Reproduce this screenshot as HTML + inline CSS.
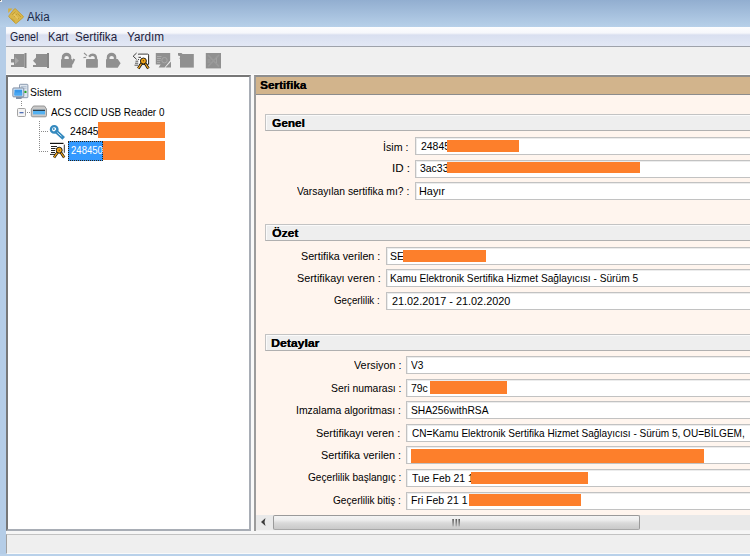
<!DOCTYPE html>
<html><head><meta charset="utf-8">
<style>
*{margin:0;padding:0;box-sizing:border-box}
html,body{width:750px;height:556px;overflow:hidden;background:#b6cfe8;font-family:"Liberation Sans",sans-serif;font-size:11px;color:#000}
.a{position:absolute;white-space:nowrap}
#title{left:0;top:0;width:750px;height:27px;background:linear-gradient(#92aed0,#b7d0e9)}
#splitbg{left:6px;top:47px;width:744px;height:507px;background:#f0f0f0}
#frameL{left:0;top:27px;width:6px;height:529px;background:#b5cde7}
#frameB{left:0;top:554px;width:750px;height:2px;background:#b9d1ea}
#menu{left:6px;top:27px;width:744px;height:20px;background:linear-gradient(#fdfdfe 0,#f6f7fb 6px,#d9dff0 8px,#dfe5f3 15px,#e3e8f5 19px);border-bottom:1px solid #9ea2aa}
.mi{font-size:12px;top:3px;color:#1e1e3c;letter-spacing:-0.3px}
#tool{left:6px;top:47px;width:744px;height:28px;background:#f0f0f0}
#tree{left:6px;top:75px;width:245px;height:456px;background:#fff;border:2px solid;border-color:#777 #a8adb5 #a8adb5 #777}
#split{left:251px;top:74px;width:3px;height:460px;background:#f9f9f9}
#line74{left:6px;top:74px;width:744px;height:1px;background:#fbfbfb}
#bot{left:6px;top:531px;width:744px;height:3px;background:#f6f6f6}
#right{left:254px;top:75px;width:496px;height:456px;background:#fff5ee;border-left:2px solid #9c9c9c;border-top:2px solid #8e8e8e}
#hdr{left:256px;top:77px;width:494px;height:18px;background:#d2b48c;border-bottom:1px solid #8c8c8c}
.sec{left:265px;width:485px;height:17px;background:#eeeeee;border:1px solid #c3c3c3;border-bottom-color:#b0b0b0;border-right:none;box-shadow:inset 1px 1px 0 #fafafa}
.sect{font-weight:bold;left:272px;letter-spacing:0.3px}
.lab{text-align:right;left:250px}
.inp{height:18px;background:#fff;border:1px solid #c2c2c2;border-right:none;box-shadow:inset 1px 1px 0 #ececec}
.it{}
.or{background:#fd7f2b;z-index:5}
#status{left:6px;top:534px;width:744px;height:20px;background:#efefef;border-top:1px solid #c2c2c2;border-bottom:1px solid #fafafa;border-left:1px solid #a0a0a0}
#sb{left:256px;top:515px;width:494px;height:16px;background:#e9e9e9;border-bottom:1px solid #f3f3f3}
#thumb{left:273px;top:515px;width:367px;height:15px;border:1px solid #9a9a9a;border-bottom-color:#a8a8a8;border-radius:2px;background:linear-gradient(#f4f4f4 0,#ededed 4px,#d9d9d9 7px,#c9c9c9 13px)}
</style></head><body>
<div class="a" id="title"></div>
<div class="a" id="frameL"></div>
<div class="a" id="frameB"></div>
<div class="a" style="left:0;top:0;width:2px;height:2px;background:#f2f2f2"></div>
<div class="a" style="left:0;top:0;width:1px;height:1px;background:#6a6a6a"></div>
<!-- title icon -->
<svg class="a" style="left:6px;top:6px" width="20" height="20" viewBox="0 0 20 20">
  <path d="M9.5 2.8 L17.2 10.2 Q17.8 10.8 17.2 11.4 L10.4 17.3 Q9.8 17.8 9.2 17.2 L3 11 Q2.4 10.3 3 9.7 L8.3 3 Q8.9 2.4 9.5 2.8Z" fill="#d9b64a" stroke="#c09a30" stroke-width="0.8"/>
  <path d="M2.2 2.4 L6.6 2.4 L2.2 7 Z" fill="#d4ae40"/>
  <path d="M6 9 L9.5 5.5 M8 11 L11.5 7.5 M5.5 12.5 L9 15.5 M9.5 10 L13 13 M12 8 L15 11" stroke="#b89028" stroke-width="0.8" fill="none" opacity="0.8"/>
  <path d="M8 8.5 L12 12.5" stroke="#f0d070" stroke-width="1.2" opacity="0.8"/>
</svg>

<div class="a" id="menu"></div>

<div class="a" id="splitbg"></div>
<div class="a" id="tool"></div>
<div class="a" id="line74"></div>
<div class="a" id="split"></div>
<div class="a" id="bot"></div>

<!-- toolbar icons -->
<svg class="a" style="left:6px;top:47px" width="230" height="27" viewBox="6 47 230 27">
 <g fill="#909090">
  <!-- icon1 insert -->
  <rect x="14" y="54" width="10.5" height="13"/>
  <rect x="24.5" y="53" width="2" height="15" fill="#868686"/>
  <rect x="11" y="59" width="4" height="3.5"/>
  <rect x="11" y="65" width="3.5" height="2"/>
  <path d="M15 57 L19 60.7 L15 64.5Z" fill="#a8a8a8"/>
  <!-- icon2 eject -->
  <rect x="36" y="54" width="11" height="13"/>
  <rect x="47" y="53" width="2" height="15" fill="#868686"/>
  <path d="M36.5 57 L33 60.7 L36.5 64.5Z"/>
  <rect x="33" y="65" width="3.5" height="2"/>
  <!-- lock1 -->
  <path d="M61.8 59 V57 A4.75 4.2 0 0 1 71.3 57 V59 H68.8 V57.5 A2.15 1.6 0 0 0 64.5 57.5 V59Z"/>
  <rect x="61" y="59" width="11.2" height="8.7" rx="0.8"/>
  <path d="M71 63 L73.2 58.6 L75.2 59.6 L73 64 L71.2 65.5Z"/>
  <!-- lock2 open -->
  <rect x="86" y="59" width="11.9" height="8.7" rx="0.8"/>
  <path d="M88.2 56 Q91 52.5 95 54 Q97.2 55 97.2 59 H94.8 Q95 56.8 93.6 56.2 Q91.5 55.5 90 57.5Z"/>
  <path d="M84 53 L87 55.6 M83.5 57.6 L86.2 57.2" stroke="#909090" stroke-width="1.1"/>
  <!-- lock3 -->
  <path d="M106.8 59 V57 A4.75 4.2 0 0 1 116.3 57 V59 H113.8 V57.5 A2.15 1.6 0 0 0 109.5 57.5 V59Z"/>
  <path d="M106 59.8 Q106 59 106.8 59 H117.7 L120.6 63.2 L117.7 67.7 H106.8 Q106 67.7 106 66.9Z"/>
  <!-- icon A -->
  <path d="M155.8 53 H170.2 V60.4 L164.6 67.5 H158.6 L160.6 64.6 H155.8Z"/>
  <path d="M165.4 67.5 L171 61.5 V67.5Z"/>
  <!-- icon B -->
  <rect x="180" y="54" width="13.8" height="13.6"/>
  <path d="M178 53 H181.5 L183.5 55 L184.5 57.5 L182 58.5 L179 58.5 L181 56.5 L178 55.5Z"/>
  <!-- icon C -->
  <rect x="205.8" y="53" width="15.2" height="15.4"/>
 </g>
 <g stroke="#b0b0b0" stroke-width="0.9" fill="none">
  <path d="M157 56.5 H161.5 M157 58.5 H161 M157 60.5 H160.5 M157 62.5 H160" stroke="#b8b8b8" stroke-width="0.7"/>
  <circle cx="164.5" cy="60.2" r="2.7" stroke="#a8a8a8" stroke-width="1"/>
  <path d="M208 55 L219 66.5 M219 55 L208 66.5" stroke="#9a9a9a" stroke-width="1.8"/><path d="M207.5 60 H210.5 M207.5 62 H210.5 M216.5 58 V63" stroke="#a4a4a4" stroke-width="0.8"/>
  
 </g>
 <!-- cert icon coloured -->
 <g>
  <path d="M138.2 54.2 H147.6 Q148.6 54.2 148.6 55.2 V64.2 H139" fill="none" stroke="#111" stroke-width="1"/>
  <rect x="138.7" y="54.7" width="9.4" height="9" fill="#fff"/>
  <path d="M136.6 53 L133.2 56.2 L136.6 59.4" stroke="#111" stroke-width="0.8" fill="none"/>
  <path d="M138.5 57.3 H141" stroke="#111" stroke-width="0.9"/>
  <rect x="138.2" y="59" width="0.9" height="0.9" fill="#111"/>
  <path d="M135.5 61.2 H138.2 M135 63.2 H138.2 M134.5 65.2 H138.2" stroke="#444" stroke-width="0.9"/>
  <path d="M142.2 62.5 L138.3 68.4 M144.6 62.5 L148.4 68.4" stroke="#111" stroke-width="2.8"/>
  <path d="M142.2 62.5 L138.3 68.4 M144.6 62.5 L148.4 68.4" stroke="#f0a418" stroke-width="1.3"/>
  <circle cx="143.4" cy="61" r="3" fill="#f0a418" stroke="#111" stroke-width="0.9"/>
  <circle cx="143.4" cy="60.8" r="0.7" fill="#7a4a00"/>
 </g>
</svg>
<div class="a" id="tree"></div>
<svg class="a" style="left:8px;top:77px" width="80" height="90" viewBox="8 77 80 90">
 <!-- computer -->
 <rect x="19.5" y="84.3" width="8.4" height="13.4" rx="0.8" fill="#dfe6ee" stroke="#8191a8" stroke-width="0.9"/>
 <path d="M21 86.6 H26.5 M21 88.2 H26.5" stroke="#9fb0c4" stroke-width="0.7"/>
 <circle cx="25.4" cy="91.9" r="1.2" fill="#22a822"/>
 <rect x="16" y="96.6" width="5.6" height="2.4" fill="#8291a6"/>
 <rect x="12.8" y="87.9" width="11" height="9" rx="0.9" fill="#b9c6d6" stroke="#7f8fa6" stroke-width="0.9"/>
 <rect x="13.8" y="88.9" width="9" height="7" fill="#eef3f8"/>
 <rect x="14.4" y="89.6" width="7.8" height="5.9" fill="#3797ea"/>
 <rect x="14.4" y="92.5" width="7.8" height="3" fill="#4aa8f2"/>
 <!-- dotted lines -->
 <g fill="#8a8a8a">
  <rect x="21" y="101" width="1" height="1"/><rect x="21" y="103" width="1" height="1"/><rect x="21" y="105" width="1" height="1"/>
  <rect x="27" y="112" width="1" height="1"/><rect x="29" y="112" width="1" height="1"/>
  <rect x="39" y="121" width="1" height="1"/><rect x="39" y="123" width="1" height="1"/><rect x="39" y="125" width="1" height="1"/><rect x="39" y="127" width="1" height="1"/><rect x="39" y="129" width="1" height="1"/><rect x="39" y="131" width="1" height="1"/><rect x="39" y="133" width="1" height="1"/><rect x="39" y="135" width="1" height="1"/><rect x="39" y="137" width="1" height="1"/><rect x="39" y="139" width="1" height="1"/><rect x="39" y="141" width="1" height="1"/><rect x="39" y="143" width="1" height="1"/><rect x="39" y="145" width="1" height="1"/><rect x="39" y="147" width="1" height="1"/><rect x="39" y="149" width="1" height="1"/><rect x="39" y="151" width="1" height="1"/>
  <rect x="41" y="131" width="1" height="1"/><rect x="43" y="131" width="1" height="1"/><rect x="45" y="131" width="1" height="1"/><rect x="47" y="131" width="1" height="1"/>
  <rect x="41" y="151" width="1" height="1"/><rect x="43" y="151" width="1" height="1"/><rect x="45" y="151" width="1" height="1"/><rect x="47" y="151" width="1" height="1"/>
 </g>
 <!-- expander -->
 <rect x="17.5" y="108.5" width="8" height="8" rx="1" fill="#f4f4f4" stroke="#a3a3a3"/>
 <rect x="19.5" y="112" width="4" height="1.3" fill="#4f6eb6"/>
 <!-- reader -->
 <path d="M33.5 106 H44.5 L46.5 109 V115.5 Q46.5 116.8 45.2 116.8 H32.8 Q31.3 116.8 31.3 115.5 V109Z" fill="#c8c8c8" stroke="#8c8c8c" stroke-width="0.9"/>
 <rect x="33" y="109.8" width="12" height="4.6" fill="#55b2f2"/>
 <rect x="33" y="109.8" width="12" height="1" fill="#222"/>
 <!-- key -->
 <circle cx="54.2" cy="129.4" r="3.3" fill="none" stroke="#3489be" stroke-width="2.3"/>
 <path d="M56.6 131.8 L62.3 137" stroke="#3489be" stroke-width="3.8" stroke-linecap="square"/>
 <path d="M57.3 132.5 L61.5 136.3" stroke="#c9e6f5" stroke-width="1"/>
 <circle cx="53.8" cy="129" r="0.9" fill="#3489be"/>
 <!-- cert -->
 <path d="M50 143.4 H63.5" stroke="#111" stroke-width="1.2"/>
 <path d="M64.3 144.6 V152.8" stroke="#333" stroke-width="1"/>
 <path d="M51 146.5 H57 M51 148.5 H55.5 M51 150.5 H55 M51 152.5 H55 M50 154.4 H55" stroke="#222" stroke-width="1"/>
 <path d="M58.2 151.5 L54 157.4 M60.2 151.5 L64.2 157.4" stroke="#111" stroke-width="2.6"/>
 <path d="M58.2 151.5 L54 157.4 M60.2 151.5 L64.2 157.4" stroke="#f0a418" stroke-width="1.3"/>
 <circle cx="59.2" cy="150.2" r="3" fill="#f0a418" stroke="#111" stroke-width="0.9"/>
 <circle cx="59.2" cy="150.2" r="0.7" fill="#6a4000"/>
</svg>

<div class="a or" style="left:98px;top:122px;width:67px;height:16px"></div>
<div class="a" style="left:68px;top:141px;width:35px;height:20px;background:#3399ff;border:1px dotted #2a2418"></div>
<div class="a or" style="left:103px;top:141px;width:62px;height:19px"></div>

<div class="a" id="right"></div>
<div class="a" id="hdr"></div>

<div class="a sec" style="top:114px"></div>
<div class="a inp" style="left:415px;top:137px;width:335px"></div>
<div class="a inp" style="left:415px;top:160px;width:335px"></div>
<div class="a inp" style="left:415px;top:182px;width:335px"></div>
<div class="a or" style="left:447px;top:140px;width:72px;height:12px"></div>
<div class="a or" style="left:447px;top:162px;width:193px;height:11px"></div>

<div class="a sec" style="top:224px"></div>
<div class="a inp" style="left:386px;top:247px;width:364px"></div>
<div class="a inp" style="left:386px;top:269px;width:364px"></div>
<div class="a inp" style="left:386px;top:292px;width:364px"></div>
<div class="a or" style="left:403px;top:250px;width:83px;height:12px"></div>

<div class="a sec" style="top:334px"></div>
<div class="a inp" style="left:406px;top:356px;width:344px"></div>
<div class="a inp" style="left:406px;top:379px;width:344px"></div>
<div class="a inp" style="left:406px;top:401px;width:344px"></div>
<div class="a inp" style="left:406px;top:424px;width:344px"></div>
<div class="a inp" style="left:406px;top:446px;width:344px"></div>
<div class="a inp" style="left:406px;top:469px;width:344px"></div>
<div class="a inp" style="left:406px;top:492px;width:344px"></div>
<div class="a or" style="left:430px;top:381px;width:77px;height:13px"></div>
<div class="a or" style="left:411px;top:449px;width:293px;height:14px"></div>
<div class="a or" style="left:471px;top:472px;width:117px;height:12px"></div>
<div class="a or" style="left:469px;top:494px;width:112px;height:12px"></div>

<div class="a" id="sb"></div>
<div class="a" id="thumb"></div>
<svg class="a" style="left:256px;top:515px" width="17" height="15"><path d="M5 7 L9.5 3 L8.5 7 L9.5 11Z" fill="#3c3c3c"/></svg>
<svg class="a" style="left:450px;top:518px" width="12" height="10"><defs><linearGradient id="gg" x1="0" y1="0" x2="0" y2="1"><stop offset="0" stop-color="#555"/><stop offset="1" stop-color="#b5b5b5"/></linearGradient></defs><rect x="2.3" y="1" width="1.6" height="7.5" fill="url(#gg)"/><rect x="5.5" y="1" width="1.6" height="7.5" fill="url(#gg)"/><rect x="8.4" y="1" width="1.6" height="7.5" fill="url(#gg)"/></svg>

<div class="a" id="status"></div>
<div class="a" style="left:26.70px;top:10px;font-size:12px;letter-spacing:0.000px;transform:scaleX(0.9684);transform-origin:0 0;color:#1c2a4a">Akia</div>
<div class="a" style="left:10.10px;top:30px;font-size:12px;letter-spacing:0.000px;transform:scaleX(0.8861);transform-origin:0 0;color:#1e1e3c">Genel</div>
<div class="a" style="left:47.55px;top:30px;font-size:12px;letter-spacing:0.000px;transform:scaleX(0.9275);transform-origin:0 0;color:#1e1e3c">Kart</div>
<div class="a" style="left:75.00px;top:30px;font-size:12px;letter-spacing:0.000px;transform:scaleX(0.9724);transform-origin:0 0;color:#1e1e3c">Sertifika</div>
<div class="a" style="left:126.75px;top:30px;font-size:12px;letter-spacing:0.000px;transform:scaleX(0.9796);transform-origin:0 0;color:#1e1e3c">Yardım</div>
<div class="a" style="left:30.35px;top:86px;font-size:11px;letter-spacing:0.000px;transform:scaleX(0.9409);transform-origin:0 0;color:#000">Sistem</div>
<div class="a" style="left:50.70px;top:106px;font-size:11px;letter-spacing:0.000px;transform:scaleX(0.8958);transform-origin:0 0;color:#000">ACS CCID USB Reader 0</div>
<div class="a" style="left:69.55px;top:125px;font-size:11px;letter-spacing:0.000px;transform:scaleX(0.9342);transform-origin:0 0;color:#000">24845</div>
<div class="a" style="left:70.75px;top:144px;font-size:11px;letter-spacing:0.000px;transform:scaleX(0.8685);transform-origin:0 0;color:#fff">248450</div>
<div class="a" style="left:260.10px;top:79px;font-size:11px;font-weight:bold;text-shadow:0.3px 0 0 #000;letter-spacing:0.000px;transform:scaleX(1.0644);transform-origin:0 0;color:#000">Sertifika</div>
<div class="a" style="left:272.15px;top:117px;font-size:11px;font-weight:bold;text-shadow:0.3px 0 0 #000;letter-spacing:0.000px;transform:scaleX(1.0683);transform-origin:0 0;color:#000">Genel</div>
<div class="a" style="left:271.70px;top:227px;font-size:11px;font-weight:bold;text-shadow:0.3px 0 0 #000;letter-spacing:0.000px;transform:scaleX(1.1043);transform-origin:0 0;color:#000">Özet</div>
<div class="a" style="left:271.40px;top:337px;font-size:11px;font-weight:bold;text-shadow:0.3px 0 0 #000;letter-spacing:0.000px;transform:scaleX(1.1123);transform-origin:0 0;color:#000">Detaylar</div>
<div class="a" style="left:383.35px;top:141px;font-size:11px;letter-spacing:0.000px;transform:scaleX(0.9680);transform-origin:0 0;color:#000">İsim :</div>
<div class="a" style="left:391.65px;top:162px;font-size:11px;letter-spacing:0.000px;transform:scaleX(1.0563);transform-origin:0 0;color:#000">ID :</div>
<div class="a" style="left:297.35px;top:185px;font-size:11px;letter-spacing:0.000px;transform:scaleX(0.9388);transform-origin:0 0;color:#000">Varsayılan sertifika mı? :</div>
<div class="a" style="left:300.65px;top:250px;font-size:11px;letter-spacing:0.000px;transform:scaleX(0.9752);transform-origin:0 0;color:#000">Sertifika verilen :</div>
<div class="a" style="left:296.65px;top:272px;font-size:11px;letter-spacing:0.000px;transform:scaleX(0.9857);transform-origin:0 0;color:#000">Sertifikayı veren :</div>
<div class="a" style="left:333.70px;top:294px;font-size:11px;letter-spacing:0.000px;transform:scaleX(0.8887);transform-origin:0 0;color:#000">Geçerlilik :</div>
<div class="a" style="left:353.70px;top:359px;font-size:11px;letter-spacing:0.000px;transform:scaleX(0.9837);transform-origin:0 0;color:#000">Versiyon :</div>
<div class="a" style="left:330.60px;top:382px;font-size:11px;letter-spacing:0.000px;transform:scaleX(0.9453);transform-origin:0 0;color:#000">Seri numarası :</div>
<div class="a" style="left:296.20px;top:404px;font-size:11px;letter-spacing:0.000px;transform:scaleX(0.9487);transform-origin:0 0;color:#000">Imzalama algoritması :</div>
<div class="a" style="left:316.15px;top:427px;font-size:11px;letter-spacing:0.000px;transform:scaleX(0.9906);transform-origin:0 0;color:#000">Sertifikayı veren :</div>
<div class="a" style="left:320.60px;top:449px;font-size:11px;letter-spacing:0.000px;transform:scaleX(0.9853);transform-origin:0 0;color:#000">Sertifika verilen :</div>
<div class="a" style="left:307.50px;top:471px;font-size:11px;letter-spacing:0.000px;transform:scaleX(0.9196);transform-origin:0 0;color:#000">Geçerlilik başlangıç :</div>
<div class="a" style="left:332.95px;top:494px;font-size:11px;letter-spacing:0.000px;transform:scaleX(0.9179);transform-origin:0 0;color:#000">Geçerlilik bitiş :</div>
<div class="a" style="left:420.70px;top:140px;font-size:11px;letter-spacing:0.000px;transform:scaleX(0.9500);transform-origin:0 0;color:#000">24845</div>
<div class="a" style="left:420.00px;top:162px;font-size:11px;letter-spacing:0.000px;transform:scaleX(0.9500);transform-origin:0 0;color:#000">3ac33</div>
<div class="a" style="left:419.40px;top:185px;font-size:11px;letter-spacing:0.000px;transform:scaleX(0.9883);transform-origin:0 0;color:#000">Hayır</div>
<div class="a" style="left:390.00px;top:250px;font-size:11px;letter-spacing:0.000px;transform:scaleX(0.9500);transform-origin:0 0;color:#000">SE</div>
<div class="a" style="left:390.20px;top:272px;font-size:11px;letter-spacing:0.000px;transform:scaleX(0.9244);transform-origin:0 0;color:#000">Kamu Elektronik Sertifika Hizmet Sağlayıcısı - Sürüm 5</div>
<div class="a" style="left:391.55px;top:295px;font-size:11px;letter-spacing:0.000px;transform:scaleX(0.9867);transform-origin:0 0;color:#000">21.02.2017 - 21.02.2020</div>
<div class="a" style="left:411.10px;top:359px;font-size:11px;letter-spacing:0.000px;transform:scaleX(0.9176);transform-origin:0 0;color:#000">V3</div>
<div class="a" style="left:411.00px;top:382px;font-size:11px;letter-spacing:0.000px;transform:scaleX(0.9500);transform-origin:0 0;color:#000">79c</div>
<div class="a" style="left:410.60px;top:404px;font-size:11px;letter-spacing:0.000px;transform:scaleX(0.9318);transform-origin:0 0;color:#000">SHA256withRSA</div>
<div class="a" style="left:411.70px;top:427px;font-size:11px;letter-spacing:0.000px;transform:scaleX(0.9134);transform-origin:0 0;color:#000">CN=Kamu Elektronik Sertifika Hizmet Sağlayıcısı - Sürüm 5, OU=BİLGEM,</div>
<div class="a" style="left:411.65px;top:472px;font-size:11px;letter-spacing:0.000px;transform:scaleX(0.9519);transform-origin:0 0;color:#000">Tue Feb 21 1</div>
<div class="a" style="left:411.00px;top:494px;font-size:11px;letter-spacing:0.000px;transform:scaleX(0.9519);transform-origin:0 0;color:#000">Fri Feb 21 1</div>
</body></html>
